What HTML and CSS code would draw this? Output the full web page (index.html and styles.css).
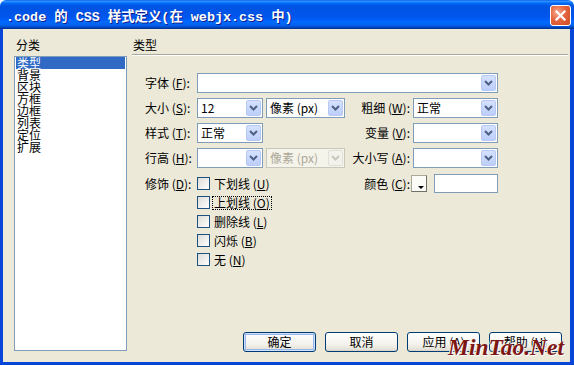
FILE: index.html
```html
<!DOCTYPE html>
<html lang="zh-CN">
<head>
  <meta charset="UTF-8">
  <title>.code 的 CSS 样式定义</title>
  <link rel="stylesheet" href="styles.css">
</head>
<body>
  <div class="window">
    <div class="titlebar">
      <span class="title">.code 的 CSS 样式定义(在 webjx.css 中)</span>
      <button class="close-btn" title="关闭">
        <svg width="13" height="13" viewBox="0 0 13 13"><path d="M2.5 2.5 L10.5 10.5 M10.5 2.5 L2.5 10.5" stroke="#fff" stroke-width="2.2" stroke-linecap="square"/></svg>
      </button>
    </div>

    <div class="client">
      <div class="category">
        <div class="group-label">分类</div>
        <ul class="category-list">
          <li class="selected">类型</li>
          <li>背景</li>
          <li>区块</li>
          <li>方框</li>
          <li>边框</li>
          <li>列表</li>
          <li>定位</li>
          <li>扩展</li>
        </ul>
      </div>

      <div class="panel">
        <div class="panel-title">类型</div>

        <div class="form">
          <!-- row 1 -->
          <label class="lbl">字体 (<u>F</u>):</label>
          <div class="combo span-all"><span class="value"></span><span class="arrow"><svg width="9" height="6" viewBox="0 0 9 6"><path d="M1 1 L4.5 4.5 L8 1" fill="none" stroke="currentColor" stroke-width="2"/></svg></span></div>

          <!-- row 2 -->
          <label class="lbl">大小 (<u>S</u>):</label>
          <div class="combo"><span class="value">12</span><span class="arrow"><svg width="9" height="6" viewBox="0 0 9 6"><path d="M1 1 L4.5 4.5 L8 1" fill="none" stroke="currentColor" stroke-width="2"/></svg></span></div>
          <div class="combo"><span class="value">像素 (px)</span><span class="arrow"><svg width="9" height="6" viewBox="0 0 9 6"><path d="M1 1 L4.5 4.5 L8 1" fill="none" stroke="currentColor" stroke-width="2"/></svg></span></div>
          <label class="rlbl">粗细 (<u>W</u>):</label>
          <div class="combo"><span class="value">正常</span><span class="arrow"><svg width="9" height="6" viewBox="0 0 9 6"><path d="M1 1 L4.5 4.5 L8 1" fill="none" stroke="currentColor" stroke-width="2"/></svg></span></div>

          <!-- row 3 -->
          <label class="lbl">样式 (<u>T</u>):</label>
          <div class="combo"><span class="value">正常</span><span class="arrow"><svg width="9" height="6" viewBox="0 0 9 6"><path d="M1 1 L4.5 4.5 L8 1" fill="none" stroke="currentColor" stroke-width="2"/></svg></span></div>
          <label class="rlbl col-r">变量 (<u>V</u>):</label>
          <div class="combo"><span class="value"></span><span class="arrow"><svg width="9" height="6" viewBox="0 0 9 6"><path d="M1 1 L4.5 4.5 L8 1" fill="none" stroke="currentColor" stroke-width="2"/></svg></span></div>

          <!-- row 4 -->
          <label class="lbl">行高 (<u>H</u>):</label>
          <div class="combo"><span class="value"></span><span class="arrow"><svg width="9" height="6" viewBox="0 0 9 6"><path d="M1 1 L4.5 4.5 L8 1" fill="none" stroke="currentColor" stroke-width="2"/></svg></span></div>
          <div class="combo disabled"><span class="value">像素 (px)</span><span class="arrow"><svg width="9" height="6" viewBox="0 0 9 6"><path d="M1 1 L4.5 4.5 L8 1" fill="none" stroke="currentColor" stroke-width="2"/></svg></span></div>
          <label class="rlbl">大小写 (<u>A</u>):</label>
          <div class="combo"><span class="value"></span><span class="arrow"><svg width="9" height="6" viewBox="0 0 9 6"><path d="M1 1 L4.5 4.5 L8 1" fill="none" stroke="currentColor" stroke-width="2"/></svg></span></div>

          <!-- row 5 -->
          <label class="lbl deco">修饰 (<u>D</u>):</label>
          <ul class="checklist">
            <li><span class="checkbox"></span><span class="ck-text">下划线 (<u>U</u>)</span></li>
            <li><span class="checkbox"></span><span class="ck-text focused">上划线 (<u>O</u>)</span></li>
            <li><span class="checkbox"></span><span class="ck-text">删除线 (<u>L</u>)</span></li>
            <li><span class="checkbox"></span><span class="ck-text">闪烁 (<u>B</u>)</span></li>
            <li><span class="checkbox"></span><span class="ck-text">无 (<u>N</u>)</span></li>
          </ul>
          <label class="rlbl deco col-r">颜色 (<u>C</u>):</label>
          <div class="color-field">
            <span class="color-btn"></span>
            <span class="color-input"></span>
          </div>
        </div>

        <div class="actions">
          <button class="btn default">确定</button>
          <button class="btn">取消</button>
          <button class="btn">应用 (<u>A</u>)</button>
          <button class="btn">帮助 (<u>H</u>)</button>
        </div>
      </div>
    </div>

    <div class="watermark">MinTao.Net</div>
  </div>
</body>
</html>
```

FILE: styles.css
```css
body {
  margin: 0;
  background: #fff;
  font-family: "Noto Sans CJK SC", "DejaVu Sans", sans-serif;
  font-size: 12px;
  color: #000;
}

.window {
  position: relative;
  width: 574px;
  height: 365px;
  display: flex;
  flex-direction: column;
}

/* title bar */
.titlebar {
  height: 29px;
  flex-shrink: 0;
  display: flex;
  align-items: center;
  justify-content: space-between;
  padding: 0 3px 0 6px;
  background: linear-gradient(to bottom, #0058ee 0%, #3593ff 4%, #288eff 6%, #127dff 8%, #036ffc 10%, #0262ee 14%, #0057e5 20%, #0054e3 24%, #0055eb 56%, #005bf5 66%, #026afe 76%, #0062ef 86%, #0052d6 92%, #0040ab 96%, #003092 100%);
  border-radius: 6px 6px 0 0;
}

.title {
  color: #fff;
  font-family: "Liberation Mono", "Noto Sans CJK SC", monospace;
  font-weight: bold;
  font-size: 13.4px;
  white-space: pre;
  text-shadow: 1px 1px #0f1e8c;
}

.close-btn {
  width: 21px;
  height: 21px;
  padding: 0;
  margin-top: 1px;
  border: 1px solid #fff;
  border-radius: 3px;
  background: radial-gradient(circle at 35% 35%, #f4ab90 0%, #e5663f 45%, #cc4a26 100%);
  display: flex;
  align-items: center;
  justify-content: center;
}

/* client area */
.client {
  flex: 1;
  display: flex;
  background: #ece9d8;
  border: 3px solid #0846d8;
  border-top: 0;
  border-right-width: 4px;
}

.category {
  width: 113px;
  margin-left: 11px;
  padding: 10px 0 11px;
  display: flex;
  flex-direction: column;
}

.group-label {
  line-height: 12px;
  padding-left: 2px;
  margin-bottom: 5px;
}

.category-list {
  flex: 1;
  margin: 0;
  padding: 0 1px;
  list-style: none;
  background: #fff;
  border: 1px solid #7f9db9;
}

.category-list li {
  height: 12px;
  line-height: 12px;
  padding-left: 1px;
}

.category-list li.selected {
  background: #316ac5;
  color: #fff;
}

.panel {
  flex: 1;
  margin: 0 2px 0 5px;
  padding: 10px 0 10px;
  display: flex;
  flex-direction: column;
}

.panel-title {
  line-height: 12px;
  padding: 0 0 3px 1px;
  border-bottom: 1px solid #aca899;
  box-shadow: 0 1px 0 #fff;
}

/* form grid */
.form {
  margin-top: 18px;
  padding-left: 13px;
  display: grid;
  grid-template-columns: 49px 66px 79px 62px 85px;
  grid-template-rows: 20px 20px 20px 20px auto;
  column-gap: 3px;
  row-gap: 5px;
}

.lbl, .rlbl {
  grid-column: 1;
  line-height: 20px;
  white-space: nowrap;
}

.rlbl {
  grid-column: 4;
  text-align: right;
}

.lbl.deco, .rlbl.deco {
  line-height: 19px;
  margin-top: 1px;
}

.span-all {
  grid-column: 2 / 6;
}

.combo {
  box-sizing: border-box;
  height: 20px;
  display: flex;
  align-items: center;
  padding: 1px;
  border: 1px solid #7f9db9;
  background: #fff;
}

.combo .value {
  flex: 1;
  padding-left: 2px;
  line-height: 16px;
  white-space: nowrap;
  overflow: hidden;
}

.combo .arrow {
  box-sizing: border-box;
  width: 15px;
  height: 16px;
  display: flex;
  align-items: center;
  justify-content: center;
  color: #4d6185;
  background: linear-gradient(to bottom, #d5e1fd, #bccefa);
  border: 1px solid #b7c9f3;
  border-radius: 2px;
}

.combo.disabled {
  border-color: #c9c7ba;
  background: #f5f4ea;
  color: #aca899;
}

.combo.disabled .arrow {
  color: #c9c7ba;
  background: #f3f2ec;
  border-color: #e2e0d6;
}

/* decoration checkboxes */
.checklist {
  grid-column: 2 / 4;
  margin: 1px 0 0;
  padding: 0;
  list-style: none;
}

.checklist li {
  height: 19px;
  display: flex;
  align-items: center;
}

.checkbox {
  box-sizing: border-box;
  width: 13px;
  height: 13px;
  margin-right: 3px;
  border: 1px solid #1c5180;
  background: linear-gradient(135deg, #dcdcd7, #fff);
}

.ck-text {
  line-height: 12px;
  padding: 0 1px;
}

.ck-text.focused {
  outline: 1px dotted #000;
}

.color-field {
  grid-column: 5;
  margin: 1px 0 0 -2px;
  height: 19px;
  display: flex;
  align-items: center;
  gap: 7px;
}

.color-btn {
  position: relative;
  box-sizing: border-box;
  width: 16px;
  height: 17px;
  border: 1px solid #aca899;
  border-right-color: #716f64;
  border-bottom-color: #716f64;
  background: #fbfbf7;
}

.color-btn::after {
  content: "";
  position: absolute;
  right: 2px;
  bottom: 2px;
  border-left: 3px solid transparent;
  border-right: 3px solid transparent;
  border-top: 3px solid #000;
}

.color-input {
  box-sizing: border-box;
  width: 64px;
  height: 19px;
  border: 1px solid #7f9db9;
  background: #fff;
}

/* buttons */
.actions {
  margin-top: auto;
  padding-right: 6px;
  display: flex;
  justify-content: flex-end;
  gap: 9px;
}

.btn {
  box-sizing: border-box;
  width: 73px;
  height: 20px;
  padding: 0;
  font-family: inherit;
  font-size: 12px;
  line-height: 16px;
  color: #000;
  border: 1px solid #003c74;
  border-radius: 3px;
  background: linear-gradient(to bottom, #fff 0%, #f4f3ee 60%, #e6e3d8 90%, #d6d0c5 100%);
}

.btn.default {
  box-shadow: inset 0 0 0 1px #cee0fb, inset 0 0 0 2px #98b6ec;
}

.watermark {
  position: absolute;
  left: 448px;
  top: 336px;
  font-family: "Liberation Serif", "DejaVu Serif", serif;
  font-style: italic;
  font-weight: bold;
  font-size: 23.5px;
  line-height: 23px;
  color: #7e1714;
  text-shadow: 1px 1px 0 #fff, -1px 0 0 #f1ece4;
}
```
